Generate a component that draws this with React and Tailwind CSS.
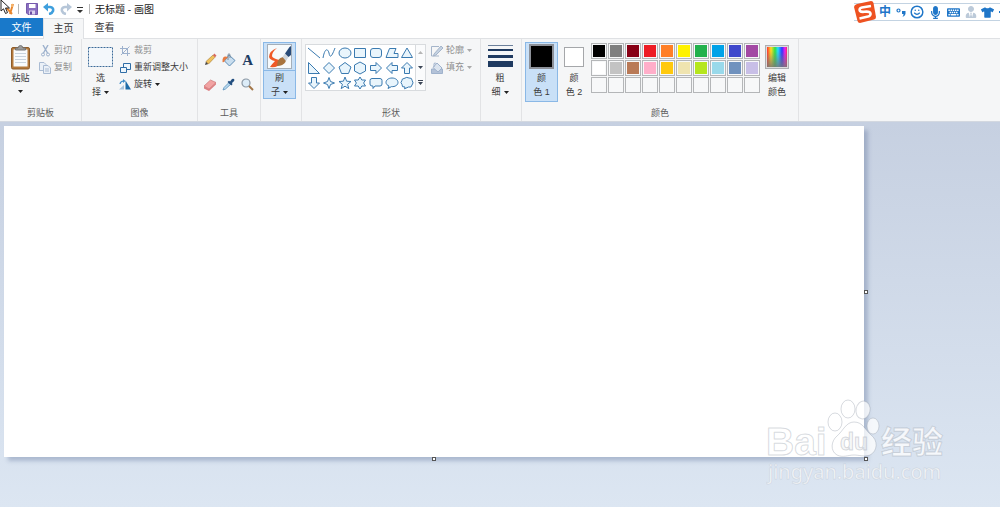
import { useState } from 'react'
import { Smile } from 'lucide-react'
import { FaMicrophone, FaKeyboard, FaTshirt, FaUserTie } from 'react-icons/fa'

const COLORS = [
  '#000000', '#7f7f7f', '#880015', '#ed1c24', '#ff7f27', '#fff200', '#22b14c', '#00a2e8', '#3f48cc', '#a349a4',
  '#ffffff', '#c3c3c3', '#b97a57', '#ffaec9', '#ffc90e', '#efe4b0', '#b5e61d', '#99d9ea', '#7092be', '#c8bfe7',
  null, null, null, null, null, null, null, null, null, null,
]

// Each outline lives in a 14x14 box
const SHAPES = [
  ['直线', 'M1 2 L13 12'],
  ['曲线', 'M1 12 C3 1 6 3 7 7 C8 13 10 10 13 2'],
  ['椭圆形', 'M1 7 a6 5 0 1 0 12 0 a6 5 0 1 0 -12 0'],
  ['矩形', 'M1.5 2.5 H12.5 V11.5 H1.5 Z'],
  ['圆角矩形', 'M4 2.5 H10 Q12.5 2.5 12.5 5 V9 Q12.5 11.5 10 11.5 H4 Q1.5 11.5 1.5 9 V5 Q1.5 2.5 4 2.5 Z'],
  ['多边形', 'M4.500 2.5 H11 L9 7.5 H13 V11.5 H1 Z'],
  ['三角形', 'M7 2 L12.5 11.5 H1.5 Z'],
  ['直角三角形', 'M1.5 1.5 V12.5 H12.5 Z'],
  ['菱形', 'M7 1.5 L12.5 7 L7 12.5 L1.5 7 Z'],
  ['五边形', 'M7 1.5 L13 6 L10.5 12.5 H3.5 L1 6 Z'],
  ['六边形', 'M7 1 L12.5 4 V10 L7 13 L1.5 10 V4 Z'],
  ['右箭头', 'M1.5 4.5 H7 V1.5 L12.5 7 L7 12.5 V9.5 H1.5 Z'],
  ['左箭头', 'M12.5 4.5 H7 V1.5 L1.5 7 L7 12.5 V9.5 H12.5 Z'],
  ['上箭头', 'M4.5 12.5 V7 H1.5 L7 1.5 L12.5 7 H9.5 V12.5 Z'],
  ['下箭头', 'M4.5 1.5 V7 H1.5 L7 12.5 L12.5 7 H9.5 V1.5 Z'],
  ['四角星', 'M7 1.5 L8.5 5.5 L12.5 7 L8.5 8.5 L7 12.5 L5.5 8.5 L1.5 7 L5.5 5.5 Z'],
  ['五角星', 'M7 1 L8.6 5.2 L13 5.5 L9.6 8.3 L10.8 12.6 L7 10.2 L3.2 12.6 L4.4 8.3 L1 5.5 L5.4 5.2 Z'],
  ['六角星', 'M7 1 L8.8 4 H12.5 L10.6 7 L12.5 10 H8.8 L7 13 L5.2 10 H1.5 L3.4 7 L1.5 4 H5.2 Z'],
  ['圆角标注', 'M3 2.5 H11 Q13 2.5 13 4.5 V8 Q13 10 11 10 H6 L4 12.5 V10 H3 Q1 10 1 8 V4.5 Q1 2.5 3 2.5 Z'],
  ['椭圆标注', 'M4 10 L3 12.5 L6.5 10.6 C10 11 13 9 13 6.5 C13 4 10.5 2 7 2 C3.5 2 1 4 1 6.5 C1 8 2.5 9.5 4 10 Z'],
  ['云形标注', 'M4 2.5 Q7 .5 9 2 Q12 1.5 12.2 4.5 Q14 7 12 9 Q11.5 12 8.5 11 L4.5 12.8 L5 11 Q1.5 11.5 2 8.5 Q0 6.5 1.8 4.8 Q1.8 2.5 4 2.5 Z'],
]

function Arrow({ className = 'fill-[#222]' }) {
  return (
    <svg width="5" height="3" viewBox="0 0 5 3" className={`shrink-0 ${className}`}>
      <path d="M0 0 H5 L2.5 3 Z" />
    </svg>
  )
}

function Group({ label, className = '', children }) {
  return (
    <section className="flex shrink-0 flex-col border-r border-[#e2e3e5] pt-[3px]">
      <div className={`flex h-[63px] items-start ${className}`}>{children}</div>
      <h2 className="h-4 text-center leading-4 text-[#5c5c5c]">{label}</h2>
    </section>
  )
}

function BigButton({ icon, active, tall, split, className = '', children, ...rest }) {
  return (
    <button
      {...rest}
      className={`flex shrink-0 flex-col items-center border leading-[14px] ${tall ? 'h-[60px]' : 'h-[57px]'} ${active ? 'border-[#8ab8e6] bg-[#c9e0f7]' : 'border-transparent'} ${className}`}
    >
      <span className={`flex h-7 w-full shrink-0 items-center justify-center border-b ${split ? 'border-[#8ab8e6]' : 'border-transparent'}`}>{icon}</span>
      {children}
    </button>
  )
}

function SmallButton({ icon, arrow, disabled, children }) {
  return (
    <button disabled={disabled} className={`flex h-[17px] items-center gap-[3px] whitespace-nowrap ${disabled ? 'text-[#8f8f8f]' : ''}`}>
      <span className="flex w-3 justify-center">{icon}</span>
      {children}
      {arrow && <Arrow className={disabled ? 'fill-[#a9a9a9]' : 'fill-[#222]'} />}
    </button>
  )
}

function TitleBar() {
  return (
    <div className="flex h-[18px] items-center bg-white pl-1">
      <svg width="10" height="12" viewBox="0 0 10 12">
        <path d="M1 3 L8 11 M9 1 L6 11" stroke="#e8862e" strokeWidth="2" />
        <path d="M7 1 H9 V4 H7 Z" fill="#f4b36a" />
      </svg>
      <span className="ml-1 h-[10px] w-px bg-[#b5b5b5]" />
      <button aria-label="保存" className="ml-[7px]">
        <svg width="12" height="12" viewBox="0 0 12 12">
          <path d="M.5 .5 H11.5 V11.5 H2 L.5 10 Z" fill="#8a6fc0" stroke="#765aac" />
          <path d="M3 1 H9.500 V5 H3 Z" fill="#fff" />
          <path d="M3 7.500 H9 V11.500 H3 Z" fill="#d9d0ec" />
          <path d="M4 8.500 H6 V11.500 H4 Z" fill="#6a4da3" />
        </svg>
      </button>
      <button aria-label="撤消" className="ml-[5px]">
        <svg width="12" height="12" viewBox="0 0 12 12" fill="none">
          <path d="M3 4 H7 Q10.800 4.500 10 8 Q9 10.500 6 11" stroke="#3f9fdd" strokeWidth="2.600" />
          <path d="M0 4 L5 0 V8.500 Z" fill="#3f9fdd" />
        </svg>
      </button>
      <button aria-label="重做" className="ml-[5px]" disabled>
        <svg width="12" height="12" viewBox="0 0 12 12" fill="none">
          <path d="M9 4 H5 Q1.200 4.500 2 8 Q3 10.500 6 11" stroke="#b6c6d8" strokeWidth="2.600" />
          <path d="M12 4 L7 0 V8.500 Z" fill="#b6c6d8" />
        </svg>
      </button>
      <button aria-label="自定义快速访问工具栏" className="ml-[5px] pt-[2px]">
        <svg width="6" height="6" viewBox="0 0 6 6" fill="#333">
          <path d="M0 0 H6 V1 H0 Z M0 3 H6 L3 6 Z" />
        </svg>
      </button>
      <span className="ml-[6px] h-[10px] w-px bg-[#b5b5b5]" />
      <h1 className="ml-[5px] text-[10px] text-[#222]">无标题 - 画图</h1>
    </div>
  )
}

// Floating input method bar in the top right corner
function ImeBar() {
  return (
    <div className="absolute top-[3px] right-0 flex h-[18px] w-[146px] items-center border-y border-[#c3d3e2] bg-white text-[#1f76c8]">
      <svg width="22" height="22" viewBox="0 0 22 22" className="shrink-0">
        <path d="M3 3 L17 0 Q19 0 19.500 2 L22 16 Q22 18 20 18.500 L6 22 Q4 22 3.500 20 L0 6 Q0 4 3 3 Z" fill="#ee5221" />
        <path d="M17 5 L8 6.500 Q4.500 7.500 6 10 Q7 11 10 10.800 Q16 10 16.500 12.500 Q17 15 13 15.800 L5.500 17.500" fill="none" stroke="#fff" strokeWidth="2.600" />
      </svg>
      <div className="flex flex-1 items-center justify-between pl-[3px]">
        <button className="text-[12px] leading-4 font-bold">中</button>
        <button aria-label="标点">
          <svg width="10" height="10" viewBox="0 0 10 10">
            <circle cx="2.500" cy="3.500" r="1.500" fill="none" stroke="currentColor" strokeWidth="1.200" />
            <path d="M6 4 H9.500 V7 Q9 9 6.500 10 Q7.500 8.500 7.500 7 H6 Z" fill="currentColor" />
          </svg>
        </button>
        <button aria-label="表情"><Smile size={14} strokeWidth={2.5} /></button>
        <button aria-label="语音"><FaMicrophone size={13} /></button>
        <button aria-label="键盘"><FaKeyboard size={13} /></button>
        <button aria-label="账户" className="text-[#bccad9]"><FaUserTie size={12} /></button>
        <button aria-label="皮肤"><FaTshirt size={13} /></button>
        <span className="h-[2px] w-px bg-[#1f76c8]" />
      </div>
    </div>
  )
}

function Tabs() {
  return (
    <nav className="flex h-[21px] border-b border-[#dfe1e4] bg-white text-[10px]">
      <button className="h-[18px] w-[43px] bg-[#1979ca] text-white">文件</button>
      <button className="-mb-px w-[41px] border border-b-0 border-[#dfe1e4] bg-[#f5f6f7] pb-[2px] text-[#333]">主页</button>
      <button className="w-[41px] pb-px text-[#333]">查看</button>
    </nav>
  )
}

function ClipboardGroup() {
  return (
    <Group label="剪贴板" className="w-[81px] pl-[4px]">
      <BigButton
        className="w-[33px]"
        icon={
          <svg width="21" height="26" viewBox="0 0 21 26">
            <rect x="1.500" y="3.500" width="18" height="21.500" rx="1.500" fill="#b57a3c" stroke="#8d5c2a" />
            <rect x="3.500" y="5.500" width="14" height="17" fill="#f8fbfd" />
            <path d="M5 9.500 H16 M5 12.500 H16 M5 15.500 H16 M5 18.500 H16" stroke="#c8d3dd" />
            <path d="M5.500 6 V4 H8 Q8.500 1.500 10.500 1.500 Q12.500 1.500 13 4 H15.500 V6 Z" fill="#9b9b9b" stroke="#757575" />
          </svg>
        }
      >
        <span>粘贴</span>
        <span className="flex h-[14px] items-center"><Arrow /></span>
      </BigButton>
      <div className="ml-[2px]">
        <SmallButton
          disabled
          icon={
            <svg width="9" height="12" viewBox="0 0 9 12" fill="none" stroke="#9db1cd">
              <path d="M2 0 L6.500 8 M7 0 L2.500 8" strokeWidth="1.400" />
              <circle cx="2" cy="9.500" r="1.500" />
              <circle cx="7" cy="9.500" r="1.500" />
            </svg>
          }
        >剪切</SmallButton>
        <SmallButton
          disabled
          icon={
            <svg width="12" height="12" viewBox="0 0 12 12" fill="#eaf0f7" stroke="#a9bbd3">
              <path d="M.5 .5 H5 L7 2.500 V8.500 H.5 Z" />
              <path d="M4.500 3.500 H9 L11.500 6 V11.500 H4.500 Z" />
              <path d="M6 7 H10 M6 9 H10" />
            </svg>
          }
        >复制</SmallButton>
      </div>
    </Group>
  )
}

function ImageGroup() {
  return (
    <Group label="图像" className="w-[115px] pl-[2px]">
      <BigButton
        className="w-[33px]"
        icon={
          <svg width="25" height="20" viewBox="0 0 25 20">
            <rect x=".5" y=".5" width="24" height="19" fill="#f3f7fb" stroke="#3c6a99" strokeDasharray="2 1" />
          </svg>
        }
      >
        <span>选</span>
        <span className="flex items-center gap-[3px]">择<Arrow /></span>
      </BigButton>
      <div className="ml-[2px]">
        <SmallButton
          disabled
          icon={
            <svg width="10" height="10" viewBox="0 0 10 10" fill="none" stroke="#9db1cd">
              <path d="M2.500 0 V7.500 H10 M0 2.500 H7.500 V10 M1 9 L9.500 .5" />
            </svg>
          }
        >裁剪</SmallButton>
        <SmallButton
          icon={
            <svg width="11" height="10" viewBox="0 0 11 10" fill="#eef6fc" stroke="#2f6da6">
              <path d="M3.500 .5 H10.500 V6.500 H3.500 Z" />
              <path d="M.5 4.500 H6.500 V9.500 H.5 Z" />
            </svg>
          }
        >重新调整大小</SmallButton>
        <SmallButton
          arrow
          icon={
            <svg width="12" height="11" viewBox="0 0 12 11">
              <path d="M0 10.500 H5 V6 Z" fill="#a9c4dd" />
              <path d="M6.500 10.500 V1.500 L12 10.500 Z" fill="#1e6ba8" />
              <path d="M1 5 Q1.500 2 4.500 2" fill="none" stroke="#3b8ac8" strokeWidth="1.200" />
              <path d="M4 0 L6.500 2 L4 4 Z" fill="#3b8ac8" />
            </svg>
          }
        >旋转</SmallButton>
      </div>
    </Group>
  )
}

function ToolsGroup() {
  return (
    <Group label="工具" className="w-[62px] px-[3px] pt-[9px]">
      <div className="grid flex-1 grid-cols-3 gap-y-2 *:flex *:h-[17px] *:items-center *:justify-center">
        <button aria-label="铅笔">
          <svg width="13" height="13" viewBox="0 0 13 13">
            <path d="M1 12 L2 8.500 L4.500 11 Z" fill="#444" />
            <path d="M2 8.500 L9 2 L11 4.200 L4.500 11 Z" fill="#f0c25c" stroke="#a67b35" strokeWidth=".6" />
            <path d="M9 2 L10.500 .6 L12.500 2.700 L11 4.200 Z" fill="#d8685e" />
          </svg>
        </button>
        <button aria-label="用颜色填充">
          <svg width="14" height="14" viewBox="0 0 14 14">
            <path d="M7 2 L13 7.500 L7.500 13 L2.500 8 Z" fill="#c9deef" stroke="#5f8db5" />
            <path d="M6 7 V1.500 Q7 0 8 1.500 V5" fill="none" stroke="#7a8b9c" />
            <path d="M6 4 Q0 2 .5 9 Q2 10 3 7 Z" fill="#e87b41" />
          </svg>
        </button>
        <button aria-label="文本" className="font-['Liberation_Serif',serif] text-[15px] leading-4 font-bold text-[#1d3c63]">A</button>
        <button aria-label="橡皮擦">
          <svg width="14" height="12" viewBox="0 0 14 12">
            <path d="M1 7 L7.500 1 L13 3.500 L6 10 Z" fill="#f2a3a3" stroke="#c97878" strokeWidth=".7" />
            <path d="M1 7 L6 10 V12 L1 9.500 Z M6 10 L13 3.500 V5.500 L6 12 Z" fill="#dd7f82" />
          </svg>
        </button>
        <button aria-label="颜色选取器">
          <svg width="13" height="13" viewBox="0 0 13 13">
            <path d="M1 12 L2 9.500 L7 4.500 L8.700 6.200 L3.500 11 Z" fill="#b9d9ee" stroke="#5891bd" strokeWidth=".8" />
            <path d="M5.500 4 L7 2.700 L8 3.500 L10 1 Q12 0 12.500 2 Q12.500 3 10 5 L10.500 6.300 L9.300 7.500 Z" fill="#234f80" />
          </svg>
        </button>
        <button aria-label="放大镜">
          <svg width="13" height="13" viewBox="0 0 13 13">
            <circle cx="5" cy="5" r="4" fill="#dcecf8" stroke="#8b98a5" strokeWidth="1.200" />
            <path d="M8 8 L12 12" stroke="#a27648" strokeWidth="2" />
          </svg>
        </button>
      </div>
    </Group>
  )
}

function BrushGroup() {
  return (
    <Group className="w-10 pl-[2px]">
      <BigButton
        active
        split
        className="w-[33px]"
        icon={
          <svg width="25" height="25" viewBox="0 0 25 25">
            <rect x=".5" y=".5" width="24" height="24" fill="#f7fafc" stroke="#a5afb9" />
            <path d="M10 4 Q2 7 2 13 Q3 16 8 17 Q5 20 3 23 Q11 24 14 19 L12 16 Q5 14 5 12 Q5 8 10 4 Z" fill="#ef5a28" />
            <path d="M10 22 Q10 14 16 13 Q20 14 18.500 18 Q16 22 10 22 Z" fill="#a8743f" />
            <path d="M15.500 13 L18 9.500 L21.500 13 L19 17 Z" fill="#d0d6dc" />
            <path d="M18 9.500 L22.500 3 L24 2 V11 L21.500 13 Z" fill="#294b78" />
          </svg>
        }
      >
        <span>刷</span>
        <span className="flex items-center gap-[3px]">子<Arrow /></span>
      </BigButton>
    </Group>
  )
}

function ShapesGroup() {
  return (
    <Group label="形状" className="w-[178px] pl-[3px]">
      <div className="mt-[2px] flex h-[47px] shrink-0 border border-[#d8dbde] bg-white">
        <div className="grid w-[109px] grid-cols-7 place-items-center">
          {SHAPES.map(([name, d]) => (
            <button key={name} aria-label={name}>
              <svg width="14" height="14" viewBox="0 0 14 14" className="block">
                <path d={d} fill={name === '直线' || name === '曲线' ? 'none' : '#e9f5fc'} stroke="#3a7ab0" />
              </svg>
            </button>
          ))}
        </div>
        <div className="flex w-[10px] flex-col border-l border-[#d8dbde] bg-[#fafbfc] *:flex *:flex-1 *:items-center *:justify-center">
          <button aria-label="上一行" disabled><Arrow className="rotate-180 fill-[#b5b5b5]" /></button>
          <button aria-label="下一行"><Arrow className="fill-[#3c4656]" /></button>
          <button aria-label="更多形状">
            <svg width="5" height="5" viewBox="0 0 5 5" fill="#3c4656"><path d="M0 0 H5 V1 H0 Z M0 2 H5 L2.500 5 Z" /></svg>
          </button>
        </div>
      </div>
      <div className="ml-[5px]">
        <SmallButton
          disabled
          arrow
          icon={
            <svg width="12" height="12" viewBox="0 0 12 12" fill="none" stroke="#a5b5ca">
              <path d="M8 1.500 H.5 V11 H8" />
              <path d="M3 9 L10 1 L12 3 L5 10 L2.500 11 Z" fill="#c5d2e2" />
            </svg>
          }
        >轮廓</SmallButton>
        <SmallButton
          disabled
          arrow
          icon={
            <svg width="12" height="12" viewBox="0 0 12 12" stroke="#9fb2cc">
              <path d="M.5 7 H11.500 V11.500 H.5 Z" fill="#b3c2d8" />
              <path d="M6 1 L11 6 L7 10 L2 5.500 Z" fill="#dbe4ef" />
              <path d="M3 5 V1.500 Q4.500 0 5.500 2" fill="none" />
            </svg>
          }
        >填充</SmallButton>
      </div>
    </Group>
  )
}

function SizeGroup() {
  return (
    <Group className="w-10 pl-[2px]">
      <BigButton
        className="w-[34px]"
        icon={
          <svg width="25" height="24" viewBox="0 0 25 24" fill="#1f3a60">
            <path d="M0 0 H25 V1 H0 Z" fill="#6c809b" />
            <path d="M0 4 H25 V6 H0 Z M0 10 H25 V13 H0 Z M0 16 H25 V22 H0 Z" />
          </svg>
        }
      >
        <span>粗</span>
        <span className="flex items-center gap-[3px]">细<Arrow /></span>
      </BigButton>
    </Group>
  )
}

function ColorsGroup() {
  const [active, setActive] = useState(0)
  const [picked, setPicked] = useState(['#000000', '#ffffff'])

  const pick = color => {
    if (!color) return
    setPicked(p => p.map((c, i) => (i === active ? color : c)))
  }

  return (
    <Group label="颜色" className="w-[276px] pl-[3px]">
      <BigButton
        tall
        active={active === 0}
        onClick={() => setActive(0)}
        className="w-[33px]"
        icon={<span className="size-[25px] border-2 border-[#8d9199]" style={{ background: picked[0] }} />}
      >
        <span>颜</span>
        <span>色 1</span>
      </BigButton>
      <BigButton
        tall
        active={active === 1}
        onClick={() => setActive(1)}
        className="w-8"
        icon={<span className="size-5 border border-[#a5a7aa]" style={{ background: picked[1] }} />}
      >
        <span>颜</span>
        <span>色 2</span>
      </BigButton>
      <div className="mt-px ml-px grid shrink-0 grid-cols-10 gap-px">
        {COLORS.map((c, i) => (
          <button
            key={i}
            aria-label={c || '自定义颜色'}
            onClick={() => pick(c)}
            className="size-4 border border-[#b4b6b8] bg-[#f7f8f9] p-px"
          >
            {c && <span className="block size-full" style={{ background: c }} />}
          </button>
        ))}
      </div>
      <BigButton
        className="ml-px w-8"
        icon={
          <svg width="24" height="24" viewBox="0 0 24 24">
            <defs>
              <linearGradient id="hue">
                <stop offset="0" stopColor="#f33" />
                <stop offset=".2" stopColor="#fd2" />
                <stop offset=".4" stopColor="#3d4" />
                <stop offset=".55" stopColor="#2df" />
                <stop offset=".75" stopColor="#33f" />
                <stop offset=".9" stopColor="#e2e" />
                <stop offset="1" stopColor="#f26" />
              </linearGradient>
              <linearGradient id="fade" x2="0" y2="1">
                <stop offset=".2" stopColor="#777" stopOpacity="0" />
                <stop offset="1" stopColor="#777" stopOpacity=".85" />
              </linearGradient>
            </defs>
            <rect x=".5" y=".5" width="23" height="23" fill="#ddd" stroke="#adafb2" />
            <rect x="2" y="2" width="20" height="20" fill="url(#hue)" />
            <rect x="2" y="2" width="20" height="20" fill="url(#fade)" />
          </svg>
        }
      >
        <span>编辑</span>
        <span>颜色</span>
      </BigButton>
    </Group>
  )
}

function Handle({ className }) {
  return <span className={`absolute size-1 border border-[#555] bg-white ${className}`} />
}

function Watermark() {
  return (
    <svg width="184" height="94" viewBox="0 0 184 94" className="pointer-events-none absolute right-[52px] bottom-[14px]" fill="#fff" fillOpacity=".75" stroke="#8c96a3" strokeOpacity=".35">
      <text x="2" y="56" fontSize="39" fontWeight="bold" fontFamily="'Liberation Sans', sans-serif">Bai</text>
      <ellipse cx="71" cy="23" rx="7" ry="9" />
      <ellipse cx="84" cy="10" rx="7" ry="9" />
      <ellipse cx="99" cy="11" rx="7" ry="9" transform="rotate(10 99 11)" />
      <ellipse cx="109" cy="27" rx="6" ry="8" />
      <path d="M90 23 C99 23 101 31 107 36 C114 41 114 52 106 56 C100 58 95 56 90 56 C84 56 79 59 73 56 C66 52 67 42 73 37 C79 32 82 23 90 23 Z" />
      <text x="76" y="51" fontSize="23" fontWeight="bold" fontFamily="'Liberation Sans', sans-serif" fill="#d3d8de" fillOpacity=".2">du</text>
      <text x="117" y="54" fontSize="31" fontWeight="bold" fontFamily="'Noto Sans CJK SC', sans-serif">经验</text>
      <text x="4" y="80" fontSize="20" fontFamily="'Noto Sans', sans-serif" strokeOpacity=".2">jingyan.baidu.com</text>
    </svg>
  )
}

export default function App() {
  return (
    <div className="relative flex min-h-screen flex-col overflow-hidden bg-white font-['Liberation_Sans','Noto_Sans_CJK_SC',sans-serif] text-[9px] text-[#3b3b3b]">
      <TitleBar />
      <Tabs />
      <div className="flex border-b border-[#d3d8e0] bg-[#f5f6f7]">
        <ClipboardGroup />
        <ImageGroup />
        <ToolsGroup />
        <BrushGroup />
        <ShapesGroup />
        <SizeGroup />
        <ColorsGroup />
      </div>

      <main className="relative flex flex-1 flex-col bg-linear-to-b from-[#c6d0e1] to-[#dce6f2] pt-1 pr-[136px] pb-[50px] pl-1">
        <div className="relative flex-1 bg-white shadow-[4px_4px_4px_rgba(90,110,150,0.35)]">
          <Handle className="top-1/2 -right-1 -translate-y-1/2" />
          <Handle className="-bottom-1 left-1/2 -translate-x-1/2" />
          <Handle className="-right-1 -bottom-1 z-10" />
        </div>
        <Watermark />
      </main>

      <ImeBar />
      <svg width="12" height="16" viewBox="0 0 12 16" className="absolute top-0 left-0">
        <path d="M1 0 V11 L3.500 8.800 L5.500 13.500 L7.500 12.600 L5.500 8 H9.500 Z" fill="#fff" stroke="#222" />
      </svg>
    </div>
  )
}
